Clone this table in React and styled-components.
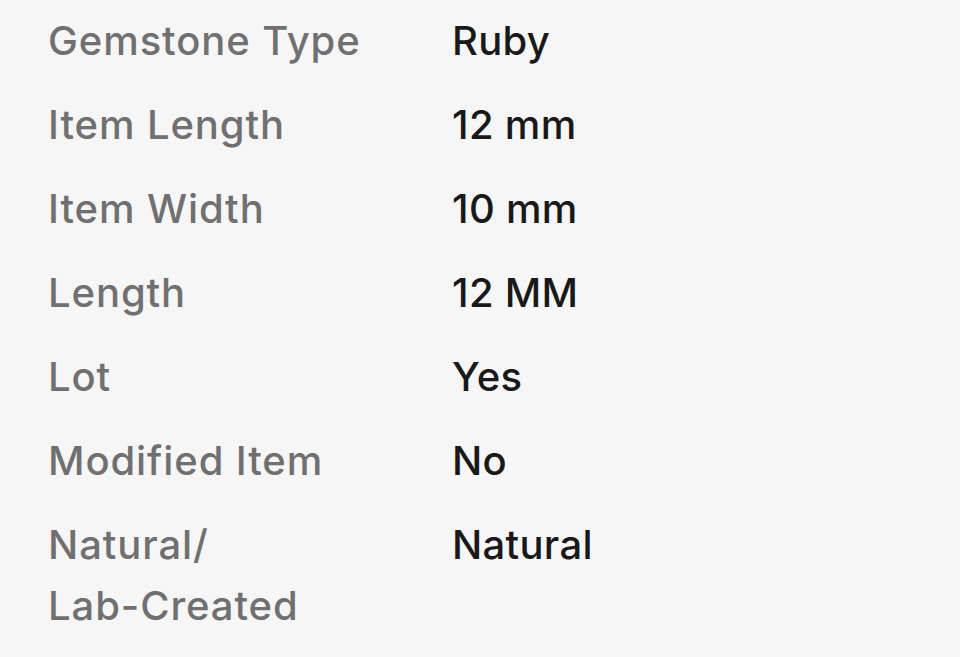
import React from "react";
import styled, { createGlobalStyle } from "styled-components";

const Global = createGlobalStyle`
  html, body { margin: 0; padding: 0; background: #f6f6f6; }
  body { font-family: Inter, "Noto Sans", sans-serif; }
`;

const Specs = styled.dl`
  margin: 0;
  padding: 10px 0 0 48px;
  display: grid;
  grid-template-columns: 404px 1fr;
  row-gap: 23px;
  font-size: 40px;
  font-weight: 500;
  line-height: 61px;
`;

const Label = styled.dt`
  margin: 0;
  color: #707070;
  letter-spacing: 0.9px;
`;

const Value = styled.dd`
  margin: 0;
  color: #191919;
  letter-spacing: 0.3px;
`;

const rows = [
  ["Gemstone Type", "Ruby"],
  ["Item Length", "12 mm"],
  ["Item Width", "10 mm"],
  ["Length", "12 MM"],
  ["Lot", "Yes"],
  ["Modified Item", "No"],
  ["Natural/\nLab-Created", "Natural"],
];

export default function App() {
  return (
    <>
      <Global />
      <Specs>
        {rows.map(([k, v]) => (
          <React.Fragment key={k}>
            <Label>
              {k.split("\n").map((line, i) => (
                <React.Fragment key={i}>
                  {i > 0 && <br />}
                  {line}
                </React.Fragment>
              ))}
            </Label>
            <Value>{v}</Value>
          </React.Fragment>
        ))}
      </Specs>
    </>
  );
}
